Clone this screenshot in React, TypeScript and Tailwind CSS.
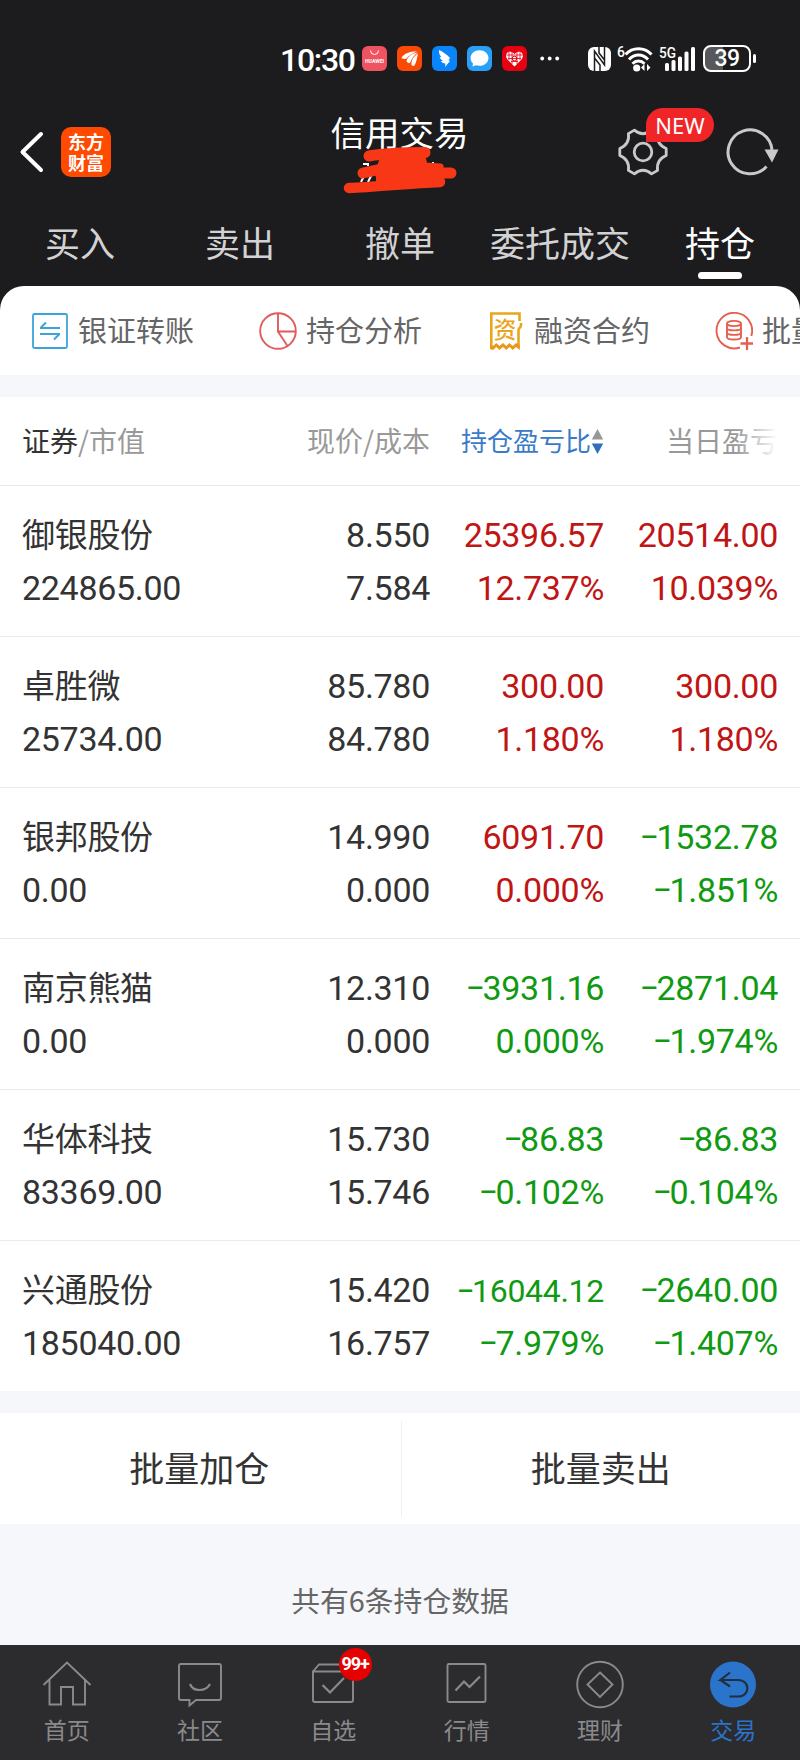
import type { ReactNode } from 'react';

interface Holding {
  name: string;
  marketValue: string;
  price: string;
  cost: string;
  profit: string;
  profitRate: string;
  dayProfit: string;
  dayRate: string;
  up: boolean;
  dayUp: boolean;
}

const holdings: Holding[] = [
  { name: '御银股份', marketValue: '224865.00', price: '8.550', cost: '7.584', profit: '25396.57', profitRate: '12.737%', dayProfit: '20514.00', dayRate: '10.039%', up: true, dayUp: true },
  { name: '卓胜微', marketValue: '25734.00', price: '85.780', cost: '84.780', profit: '300.00', profitRate: '1.180%', dayProfit: '300.00', dayRate: '1.180%', up: true, dayUp: true },
  { name: '银邦股份', marketValue: '0.00', price: '14.990', cost: '0.000', profit: '6091.70', profitRate: '0.000%', dayProfit: '-1532.78', dayRate: '-1.851%', up: true, dayUp: false },
  { name: '南京熊猫', marketValue: '0.00', price: '12.310', cost: '0.000', profit: '-3931.16', profitRate: '0.000%', dayProfit: '-2871.04', dayRate: '-1.974%', up: false, dayUp: false },
  { name: '华体科技', marketValue: '83369.00', price: '15.730', cost: '15.746', profit: '-86.83', profitRate: '-0.102%', dayProfit: '-86.83', dayRate: '-0.104%', up: false, dayUp: false },
  { name: '兴通股份', marketValue: '185040.00', price: '15.420', cost: '16.757', profit: '-16044.12', profitRate: '-7.979%', dayProfit: '-2640.00', dayRate: '-1.407%', up: false, dayUp: false },
];

const tabs = ['买入', '卖出', '撤单', '委托成交', '持仓'];

const StatusBar = () => (
  <div className="flex h-[100px] items-start pt-[45px] pl-[280px] text-white">
    <span className="-mt-[4px] w-[82px] font-['Roboto'] text-[32px] leading-[38px] font-medium tracking-[-1.3px]">10:30</span>
    <div className="mt-px flex gap-[10px]">
      <svg className="size-[25px]" viewBox="0 0 25 25">
        <rect width="25" height="25" rx="6" fill="#ef5360" />
        <path d="M8.500 4.500a4 4 0 0 0 8 0" fill="none" stroke="#fff" strokeWidth="1" />
        <text x="12.500" y="16.500" textAnchor="middle" fontSize="4.600" textLength="19" lengthAdjust="spacingAndGlyphs" fontWeight="700" fontFamily="Roboto, sans-serif" fill="#fff">HUAWEI</text>
      </svg>
      <svg className="size-[25px]" viewBox="0 0 25 25">
        <rect width="25" height="25" rx="6" fill="#fb4a05" />
        <path d="M4.500 12C7 7 13 5.500 20 5.500C16 7 12 9 9.500 12.500C8 13.500 6 13 4.500 12ZM9.500 15C11 10 15 7.500 20.500 6.500C16.500 10 14.500 13 13 17C11.500 17.500 10 16.500 9.500 15ZM14.500 19C14 14 17 10 21 7.500C20 11 20 15 17.500 19.500C16.500 20.200 15.300 20 14.500 19Z" fill="#fff" />
      </svg>
      <svg className="size-[25px]" viewBox="0 0 25 25">
        <rect width="25" height="25" rx="6" fill="#0a84fb" />
        <path d="M7 4C11 6 15 8.500 18 12L16.500 14.500L18 15L13 21L13.500 17.500C11 17.500 9.500 16.500 9 15L11 14.800C9 13.800 8 12.500 7.700 11L9.500 11.200C7.500 9 6.800 7 7 4Z" fill="#fff" />
      </svg>
      <svg className="size-[25px]" viewBox="0 0 25 25">
        <rect width="25" height="25" rx="6" fill="#27a0f6" />
        <path d="M12.500 4.200C17.600 4.200 21.500 7.600 21.500 12C21.500 16.400 17.600 19.800 12.500 19.800C11.500 19.800 10 19.600 9 19.300L5.500 20.600L6 17.400C4.400 16 3.600 14.100 3.600 12C3.600 7.600 7.400 4.200 12.500 4.200Z" fill="#fff" />
      </svg>
      <svg className="size-[25px]" viewBox="0 0 25 25">
        <rect width="25" height="25" rx="6" fill="#e60012" />
        <path d="M12.500 20.500L5.500 13.500C3 10.500 4 6.500 7.200 5.800C9.500 5.300 11.500 6.500 12.500 8.300C13.500 6.500 15.500 5.300 17.800 5.800C21 6.500 22 10.500 19.500 13.500Z" fill="#fff" />
        <path d="M7 6V14M10 6V18M15 6V18M18 6V14M4.500 9H20.500M6 12.500H19M9 15.500H16" stroke="#e60012" strokeWidth="0.8" />
        <circle cx="12.500" cy="12.500" r="2.300" fill="none" stroke="#e60012" strokeWidth="1" />
      </svg>
    </div>
    <svg className="mt-[11px] ml-[13px] h-[5px] w-[20px]" viewBox="0 0 20 5" fill="#fff">
      <circle cx="2.200" cy="2.500" r="1.900" />
      <circle cx="9.700" cy="2.500" r="1.900" />
      <circle cx="17.200" cy="2.500" r="1.900" />
    </svg>
    {/* NFC */}
    <svg className="mt-[2px] ml-[28px] h-[24px] w-[23px]" viewBox="0 0 23 24">
      <rect width="23" height="24" rx="6" fill="#fff" />
      <path d="M6.500 24V4L16.500 18V0M11 0V6L16.500 13M12 24V18L6.500 11" fill="none" stroke="#1c1c1e" strokeWidth="1.500" />
    </svg>
    {/* wifi 6 */}
    <svg className="ml-[6px] h-[28px] w-[36px]" viewBox="0 0 36 28">
      <text x="0" y="11.500" fontSize="14" fontWeight="500" fontFamily="Roboto, sans-serif" fill="#fff">6</text>
      <path d="M8.500 9.500C15.500 1.800 27.500 1.800 34.500 9.500M12 14.500C17.500 8.500 25.500 8.500 31 14.500M15.500 18.700C19 15 24 15 27.500 18.700" fill="none" stroke="#fff" strokeWidth="3" />
      <circle cx="19.700" cy="23" r="3.600" fill="#fff" />
      <path d="M24 22.500L27.500 19V26ZM33.500 22.500L30 19V26Z" fill="#fff" />
    </svg>
    {/* 5G */}
    <svg className="ml-[6px] h-[28px] w-[37px]" viewBox="0 0 37 28" fill="#fff">
      <text x="0" y="12.500" fontSize="15" fontWeight="500" textLength="17" lengthAdjust="spacingAndGlyphs" fontFamily="Roboto, sans-serif">5G</text>
      <rect x="6" y="18" width="4" height="8" rx="1.500" />
      <rect x="12.500" y="15" width="4" height="11" rx="1.500" />
      <rect x="19" y="11.500" width="4" height="14.500" rx="1.500" />
      <rect x="25.500" y="6.500" width="4" height="19.500" rx="1.500" />
      <rect x="32" y="2" width="4" height="24" rx="1.500" />
    </svg>
    <div className="ml-[7px] flex items-center">
      <div className="flex h-[27px] w-[48px] items-center justify-center rounded-[8px] border-2 border-white bg-linear-to-r from-[#58585a] from-40% to-[#1c1c1e] to-40% font-['Roboto'] text-[23px] leading-none font-medium tracking-[-0.5px]">39</div>
      <div className="ml-[2px] h-[9px] w-[3px] rounded-full bg-white" />
    </div>
  </div>
);

const Header = () => (
  <header className="flex h-[104px] items-center">
    <div className="flex w-[266px] items-center pl-[19px]">
      <svg className="h-[42px] w-[26px]" viewBox="0 0 26 42" fill="none" stroke="#fff" strokeWidth="4" strokeLinecap="round" strokeLinejoin="round">
        <path d="M22 3L3.500 21L22 39" />
      </svg>
      <div className="ml-[16px] flex size-[50px] flex-col items-center justify-center rounded-[10px] bg-[#ff4a00] pb-px text-[18px] leading-[21px] font-bold text-white">
        <span>东方</span>
        <span>财富</span>
      </div>
    </div>
    <div className="flex w-[267px] flex-col items-center">
      <h1 className="text-[34.500px] leading-[40px] text-white">信用交易</h1>
      {/* nombre de la cuenta tachado */}
      <svg className="-mt-[7px] h-[50px] w-[120px]" viewBox="339 145 120 50">
        <path d="M362 165H367V167M360 183L363 177M367 183L371 175M432 163V166" stroke="#fff" strokeWidth="2" fill="none" />
        <g stroke="#f73716" strokeLinecap="round" strokeLinejoin="round" fill="#f73716">
          <path d="M368 157C385 154 405 153.500 424 153.500" strokeWidth="11" />
          <path d="M377 174L380 163L422 158L424 166L440 167L441 183L378 186Z" strokeWidth="5" />
          <path d="M362 174L385 169M400 174H450" strokeWidth="11" />
          <path d="M348 189C375 188 410 184 439 183" strokeWidth="10.500" fill="none" />
        </g>
      </svg>
    </div>
    <div className="flex flex-1 items-center justify-end pr-[21px]">
      <div className="relative">
        <svg className="size-[50px]" viewBox="0 0 50 50" fill="none" stroke="#c9c9cb" strokeWidth="2.800" strokeLinejoin="round">
          <path d="M48.200 21.500V28.500Q38 33 39.600 43.400L33.600 46.900Q25 39.500 16.400 46.900L10.400 43.400Q12 33 1.800 28.500V21.500Q12 17 10.400 6.600L16.400 3.100Q25 10.500 33.600 3.100L39.600 6.600Q38 17 48.200 21.500Z" />
          <circle cx="25" cy="25" r="8.800" />
        </svg>
        <span className="absolute -top-[19px] left-[28px] flex h-[34px] w-[68px] items-center justify-center rounded-[17px] rounded-bl-none bg-[#ef2528] font-['Noto_Sans'] text-[22px] leading-none text-white">NEW</span>
      </div>
      <svg className="ml-[58px] h-[50px] w-[53px]" viewBox="0 0 53 50">
        <path d="M40.500 39.500A22 22 0 1 1 46 23" fill="none" stroke="#c9c9cb" strokeWidth="3" />
        <path d="M38.500 22.500H52.500L46 35.500Z" fill="#c9c9cb" />
      </svg>
    </div>
  </header>
);

interface QuickItemProps {
  icon: ReactNode;
  label: string;
}

const QuickItem = ({ icon, label }: QuickItemProps) => (
  <div className="flex w-[228px] shrink-0 items-center gap-[9px] text-[29px] leading-none whitespace-nowrap text-[#666]">
    {icon}
    <span className="-mt-[2px]">{label}</span>
  </div>
);

const QuickActions = () => (
  <div className="flex h-[89px] items-center overflow-hidden rounded-t-[24px] bg-white pl-[31px]">
    <QuickItem label="银证转账" icon={
      <svg className="size-[38px] shrink-0" viewBox="0 0 38 38" fill="none" stroke="#3ba3dc" strokeWidth="1.800">
        <rect x="2" y="2" width="34" height="34" rx="1.500" />
        <path d="M9 16H29M9.500 16L15 10.500M9 22H29M28.500 22L23 27.500" strokeWidth="2" />
      </svg>
    } />
    <QuickItem label="持仓分析" icon={
      <svg className="size-[38px] shrink-0" viewBox="0 0 38 38" fill="none" stroke="#e25a5c" strokeWidth="1.900">
        <circle cx="19" cy="19" r="17.800" />
        <path d="M19 1V19.500H37M19 19.500L28.500 34" />
      </svg>
    } />
    <QuickItem label="融资合约" icon={
      <svg className="size-[38px] shrink-0" viewBox="0 0 38 38">
        <path d="M4.300 36V1.500H32.500V9M31.500 36V18C31.500 15.500 34 16.500 34 13V11" fill="none" stroke="#e9a61c" strokeWidth="2.600" />
        <path d="M3 37V32L6 34L9.300 31L12.500 34L16 31L19.300 34L22.500 31L25.800 34L29 31L32.800 33V38L29 35L25.800 38L22.500 35L19.300 38L16 35L12.500 38L9.300 35L6 38Z" fill="#e9981c" />
        <text x="18" y="25.500" textAnchor="middle" fontSize="22.500" fontWeight="500" fill="#e9a61c">资</text>
      </svg>
    } />
    <QuickItem label="批量交易" icon={
      <svg className="size-[38px] shrink-0" viewBox="0 0 38 38" fill="none" stroke="#e5604f" strokeWidth="1.900">
        <path d="M36.300 24A17.800 17.800 0 1 0 25 35.500" />
        <ellipse cx="19" cy="11.500" rx="7" ry="2.600" />
        <path d="M12 11.500V25C12 28.400 26 28.400 26 25V11.500M12 16C12 19.200 26 19.200 26 16M12 20.500C12 23.700 26 23.700 26 20.500" />
        <path d="M32 25V38M25.500 31.500H38" strokeWidth="2.300" />
      </svg>
    } />
  </div>
);

const TableHead = () => (
  <div className="grid h-[88px] grid-cols-[260px_148px_174px_174px] items-center pb-[2px] pl-[22px] text-[28px] leading-none text-[#999]">
    <div className="whitespace-nowrap"><span className="text-[#333]">证券</span>/市值</div>
    <div className="text-right whitespace-nowrap">现价/成本</div>
    <div className="flex items-center justify-end text-[26px] whitespace-nowrap text-[#3a7bc8]">
      持仓盈亏比
      <svg className="mt-[2px] h-[25px] w-[13px]" viewBox="0 0 13 25">
        <path d="M6.500 0L12.200 10.500H0.800Z" fill="#97979a" />
        <path d="M6.500 25L12.200 14.500H0.800Z" fill="#2f6fbb" />
      </svg>
    </div>
    <div className="relative text-right whitespace-nowrap">
      当日盈亏
      <div className="absolute inset-y-0 right-0 w-[42px] bg-linear-to-r from-white/0 to-white" />
    </div>
  </div>
);

// El signo menos se dibuja ancho, como los dígitos
const Amount = ({ value }: { value: string }) =>
  value.startsWith('-') ? (
    // los importes largos se encogen para caber en la columna
    <span className={value.length > 8 ? 'text-[32px]' : ''}>
      <span className="tracking-[-2.500px]">−</span>
      {value.slice(1)}
    </span>
  ) : (
    <>{value}</>
  );

const HoldingRow = ({ item }: { item: Holding }) => (
  <div className="grid h-[151px] grid-cols-[234px_174px_174px_174px] border-t border-[#ebebeb] pt-[23px] pl-[22px] text-right font-['Roboto','Noto_Sans_CJK_SC',sans-serif] text-[34px] leading-[53px] tracking-[-0.3px] text-[#333]">
    <div className="text-left whitespace-nowrap">
      <div className="h-[53px] text-[33px]">{item.name}</div>
      <div className="h-[53px]">{item.marketValue}</div>
    </div>
    <div>
      <div className="h-[53px]">{item.price}</div>
      <div className="h-[53px]">{item.cost}</div>
    </div>
    <div className={item.up ? 'text-[#c01515]' : 'text-[#0f9a12]'}>
      <div className="h-[53px]"><Amount value={item.profit} /></div>
      <div className="h-[53px]"><Amount value={item.profitRate} /></div>
    </div>
    <div className={item.dayUp ? 'text-[#c01515]' : 'text-[#0f9a12]'}>
      <div className="h-[53px]"><Amount value={item.dayProfit} /></div>
      <div className="h-[53px]"><Amount value={item.dayRate} /></div>
    </div>
  </div>
);

const navItems = [
  {
    label: '首页',
    icon: <path d="M1.500 25L25 2.500L48.500 25M7.500 20V44.500H19V27H31V44.500H43V20" />,
  },
  {
    label: '社区',
    icon: (
      <>
        <path d="M6 4H44Q46 4 46 6V38Q46 40 44 40H21L14.500 45.500V40H6Q4 40 4 38V6Q4 4 6 4Z" />
        <path d="M15 24C18 32 31 32 35 24" strokeWidth="2.200" />
      </>
    ),
  },
  {
    label: '自选',
    icon: (
      <>
        <path d="M5 11.500H45V40Q45 42 43 42H7Q5 42 5 40ZM5 11.500L11 4.500H39L45 11.500" />
        <path d="M14.500 25L22 32.500L36 18" strokeWidth="2.200" />
      </>
    ),
  },
  {
    label: '行情',
    icon: (
      <>
        <rect x="5.500" y="4" width="38" height="38" rx="1.500" />
        <path d="M13.500 30.500L22 21.500L27.500 27L38 16.500" strokeWidth="2.200" />
      </>
    ),
  },
  {
    label: '理财',
    icon: (
      <>
        <circle cx="25" cy="24.500" r="22.800" />
        <path d="M25 12.500L37.500 24.500L25 37L12.500 24.500Z" />
      </>
    ),
  },
  {
    label: '交易',
    icon: (
      <>
        <circle cx="25" cy="24.500" r="23" fill="#2b74cb" stroke="none" />
        <path d="M22 12.500L12.500 20H30C42.500 20 42.500 36.500 30 36.500H21.500M12.500 20L22 26.500" stroke="#20303f" strokeWidth="2.200" />
      </>
    ),
  },
];

const BottomNav = () => (
  <nav className="grid h-[115px] grid-cols-6 bg-[#2c2c2e] pt-[15px]">
    {navItems.map((item) => (
      <div key={item.label} className={`relative flex flex-col items-center text-[23px] leading-[30px] ${item.label === '交易' ? 'text-[#2b74cb]' : 'text-[#8a8a8c]'}`}>
        <svg className="size-[50px]" viewBox="0 0 50 50" fill="none" stroke="currentColor" strokeWidth="1.900">
          {item.icon}
        </svg>
        <span className="mt-[4px]">{item.label}</span>
        {item.label === '自选' && (
          <span className="absolute -top-[12px] left-[72px] flex size-[33px] items-center justify-center rounded-full bg-[#e60000] pb-px font-['Roboto'] text-[18px] font-bold tracking-[-1px] text-white">99+</span>
        )}
      </div>
    ))}
  </nav>
);

export default function App() {
  return (
    <div className="flex h-[1760px] w-[800px] flex-col overflow-hidden bg-[#f5f7fa] font-['Noto_Sans_CJK_SC',sans-serif]">
      <div className="bg-[#1c1c1e]">
        <StatusBar />
        <Header />
        <div className="grid h-[82px] grid-cols-5 text-center text-[35px] leading-[76px] text-[#d2d2d4]">
          {tabs.map((tab) => (
            <div key={tab} className={tab === '持仓' ? 'relative text-white' : 'whitespace-nowrap'}>
              {tab}
              {tab === '持仓' && <div className="absolute top-[68px] left-[58px] h-[7px] w-[44px] rounded-full bg-white" />}
            </div>
          ))}
        </div>
        <QuickActions />
      </div>

      <div className="mt-[22px] bg-white">
        <TableHead />
        {holdings.map((item) => (
          <HoldingRow key={item.name} item={item} />
        ))}
      </div>

      <div className="mt-[22px] flex h-[111px] items-center bg-white text-center text-[35px] leading-none text-[#333]">
        <div className="flex-1 pr-[2px] pb-[4px]">批量加仓</div>
        <div className="h-[96px] w-px bg-[#f0f0f2]" />
        <div className="flex-1 pb-[4px]">批量卖出</div>
      </div>

      <div className="flex flex-1 items-center justify-center pt-[31px] text-[28.800px] text-[#666]">共有6条持仓数据</div>
      <BottomNav />
    </div>
  );
}
